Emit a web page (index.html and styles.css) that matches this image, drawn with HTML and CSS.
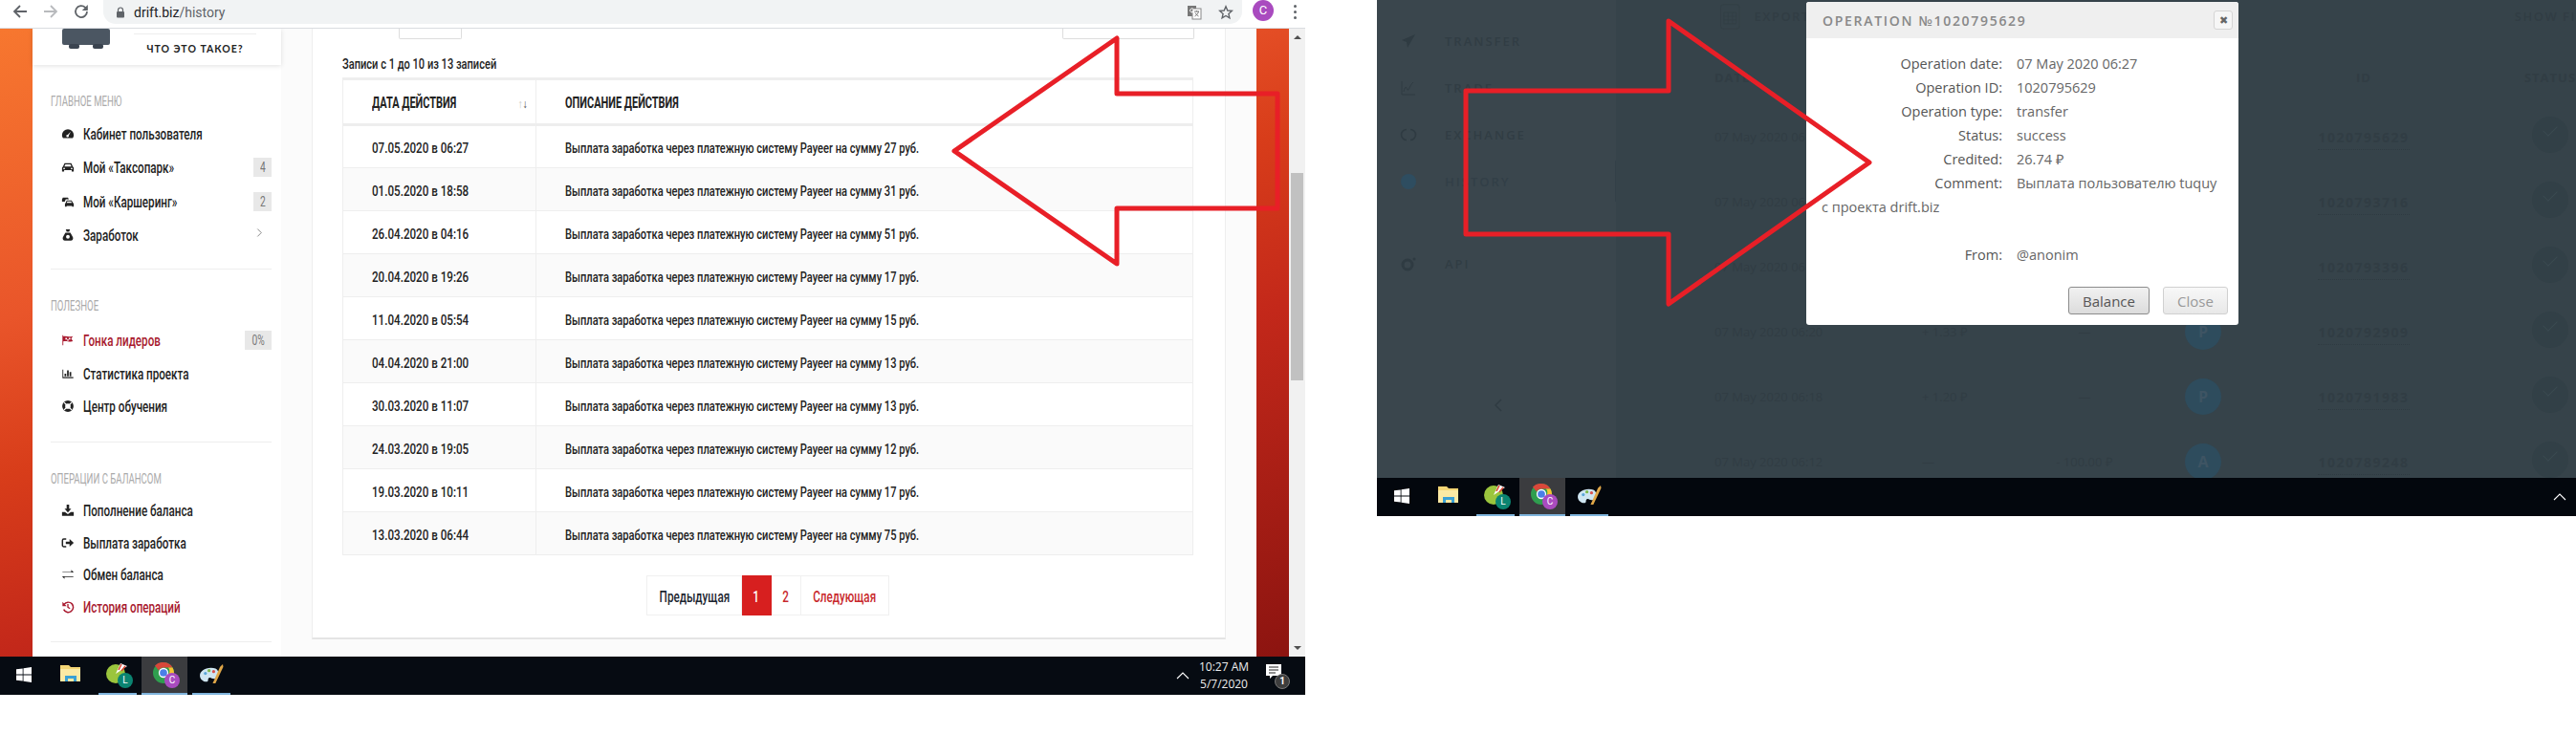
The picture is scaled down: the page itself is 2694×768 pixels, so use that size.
FILE: index.html
```html
<!DOCTYPE html>
<html lang="ru">
<head>
    <meta charset="UTF-8">
    <meta name="viewport" content="width=device-width, initial-scale=1.0">
    <title>drift.biz history</title>
    <link rel="stylesheet" href="styles.css">
</head>
<body>
    <!-- Левый снимок: браузер с историей операций -->
    <div class="shot shot-browser">
        <div class="toolbar">
            <svg class="nav-icon" viewBox="0 0 18 18"><path d="M16 9H3M9 3 3 9l6 6" fill="none" stroke="#5f6368" stroke-width="1.800"/></svg>
            <svg class="nav-icon" viewBox="0 0 18 18"><path d="M2 9h13M9 3l6 6-6 6" fill="none" stroke="#b8babd" stroke-width="1.800"/></svg>
            <svg class="nav-icon" viewBox="0 0 18 18"><path d="M15 9a6 6 0 1 1-1.800-4.200L15 6.500" fill="none" stroke="#5f6368" stroke-width="1.800"/><path d="M15.800 2v6h-6z" fill="#5f6368"/></svg>
            <div class="omnibox">
                <svg class="lock" viewBox="0 0 10 12"><path d="M2.500 5V3.500a2.500 2.500 0 0 1 5 0V5" fill="none" stroke="#5f6368" stroke-width="1.200"/><rect x="1" y="5" width="8" height="6.500" rx="1" fill="#5f6368"/></svg>
                <span class="url">drift.biz<span class="url-path">/history</span></span>
                <span class="omni-spacer"></span>
                <svg class="translate" viewBox="0 0 16 16"><rect x="1" y="1" width="9" height="11" fill="#777"/><rect x="6" y="4" width="9" height="11" fill="#fff" stroke="#888" stroke-width="1"/><path d="M8 7h5M10.500 6v1M12.500 7c-.5 2-2 4-4 5M9 8.500c.8 1.500 2 2.800 3.500 3.500" fill="none" stroke="#777"/><path d="M7 4.500a2 2 0 1 0 .3 2.500H5.500" fill="none" stroke="#fff"/></svg>
                <svg class="star" viewBox="0 0 16 16"><path d="M8 1.800 9.800 6l4.500.4-3.400 3 1 4.400L8 11.500l-3.900 2.300 1-4.400-3.400-3L6.200 6z" fill="none" stroke="#5f6368" stroke-width="1.400"/></svg>
            </div>
            <span class="avatar">C</span>
            <span class="kebab"><i></i><i></i><i></i></span>
        </div>

        <div class="viewport">
            <div class="page">
                <aside class="sidebar">
                    <div class="promo">
                        <svg class="safe" viewBox="0 0 50 21"><rect x="0" y="0" width="50" height="17" rx="2" fill="#4b5662"/><rect x="7" y="16" width="11" height="5" rx="2" fill="#3b4450"/><rect x="32" y="16" width="11" height="5" rx="2" fill="#3b4450"/></svg>
                        <div class="promo-text"><span class="promo-label">ЧТО ЭТО ТАКОЕ?</span></div>
                    </div>

                    <div class="menu-group menu-main">
                        <div class="menu-title"><span class="sq">ГЛАВНОЕ МЕНЮ</span></div>
                        <a class="menu-row">
                            <svg class="menu-icon" viewBox="0 0 16 16"><path d="M8 2.500a7 7 0 0 0-7 7c0 1.500.4 2.800 1.200 3.500h11.600c.8-.7 1.200-2 1.200-3.500a7 7 0 0 0-7-7zm3.500 2.800L9 10a1.500 1.500 0 1 1-1.200-.9z"/></svg>
                            <span class="sq">Кабинет пользователя</span>
                        </a>
                        <a class="menu-row">
                            <svg class="menu-icon" viewBox="0 0 16 16"><path d="M4 3h8l2 4.500c.7.300 1 .8 1 1.500v4h-2.500v-1.500h-9V13H1V9c0-.7.3-1.200 1-1.500zm1 1.500L3.800 7h8.400L11 4.500zM3.500 8.500a1 1 0 1 0 0 2 1 1 0 0 0 0-2zm9 0a1 1 0 1 0 0 2 1 1 0 0 0 0-2z"/></svg>
                            <span class="sq">Мой «Таксопарк»</span>
                            <span class="badge"><span class="sq-mid">4</span></span>
                        </a>
                        <a class="menu-row">
                            <svg class="menu-icon" viewBox="0 0 16 16"><path d="M2 3h6l1.200 2H5.500L4.200 8H1V5zM6.500 6.500h6l1.500 2.800c.6.300 1 .7 1 1.400V14h-2v-1H6.500v1h-2v-3.300c0-.7.400-1.100 1-1.400zm.8 1.200-.8 1.600h6.200l-.8-1.600z"/></svg>
                            <span class="sq">Мой «Каршеринг»</span>
                            <span class="badge"><span class="sq-mid">2</span></span>
                        </a>
                        <a class="menu-row">
                            <svg class="menu-icon" viewBox="0 0 16 16"><path d="M5.500 1h5l-1 3h-3zM5 5h6l3 5.500c.7 2-.5 4-2.500 4h-7C2.500 14.500 1.300 12.500 2 10.500z"/><circle cx="8" cy="10" r="2.200" fill="#fff"/></svg>
                            <span class="sq">Заработок</span>
                            <svg class="chevron" viewBox="0 0 8 12"><path d="M1.500 1.500 6 6l-4.500 4.500" fill="none" stroke="#777" stroke-width="1"/></svg>
                        </a>
                    </div>

                    <div class="menu-group menu-useful">
                        <div class="menu-title"><span class="sq">ПОЛЕЗНОЕ</span></div>
                        <a class="menu-row is-active">
                            <svg class="menu-icon" viewBox="0 0 16 16"><path d="M1.500 2v12h1V9.500c3-1 5 1 11.500-.5l-2-3 2-3C8 4.500 6 2.500 2.500 3.500V2z"/><path d="M5 5h2v2H5zm4 0h2v2H9zM7 7h2v1.500H7z" fill="#fff"/></svg>
                            <span class="sq">Гонка лидеров</span>
                            <span class="badge badge-wide"><span class="sq-mid">0%</span></span>
                        </a>
                        <a class="menu-row">
                            <svg class="menu-icon" viewBox="0 0 16 16"><path d="M1.500 3h1v9h12v1.500h-13z"/><path d="M4 8h2v3H4zm3-4h2v7H7zm3 2h2v5h-2z"/></svg>
                            <span class="sq">Статистика проекта</span>
                        </a>
                        <a class="menu-row">
                            <svg class="menu-icon" viewBox="0 0 16 16"><circle cx="8" cy="8" r="5" fill="none" stroke="#222" stroke-width="3.500"/><path d="M3.500 3.500l2.500 2.500M12.500 3.500 10 6M3.500 12.500 6 10M12.500 12.500 10 10" stroke="#fff" stroke-width="1.400"/></svg>
                            <span class="sq">Центр обучения</span>
                        </a>
                    </div>

                    <div class="menu-group menu-balance">
                        <div class="menu-title"><span class="sq">ОПЕРАЦИИ С БАЛАНСОМ</span></div>
                        <a class="menu-row">
                            <svg class="menu-icon" viewBox="0 0 16 16"><path d="M6.500 1h3v5h2.500L8 10.500 4 6h2.500zM1 10h3.500L8 12.500 11.500 10H15v4.500H1z"/></svg>
                            <span class="sq">Пополнение баланса</span>
                        </a>
                        <a class="menu-row">
                            <svg class="menu-icon" viewBox="0 0 16 16"><path d="M6 3.500H3a1.500 1.500 0 0 0-1.500 1.500v6A1.500 1.500 0 0 0 3 12.500h3" fill="none" stroke="#222" stroke-width="1.700"/><path d="M5.500 6.500H10V3.500L15 8l-5 4.500v-3H5.500z"/></svg>
                            <span class="sq">Выплата заработка</span>
                        </a>
                        <a class="menu-row">
                            <svg class="menu-icon" viewBox="0 0 16 16"><path d="M1.500 5H12V2.500L15 5.700l-3 .1H1.500zM14.500 11H4v2.500L1 10.300l3-.1h10.500z"/></svg>
                            <span class="sq">Обмен баланса</span>
                        </a>
                        <a class="menu-row is-active">
                            <svg class="menu-icon" viewBox="0 0 16 16"><path d="M3.500 5A6 6 0 1 1 3 11" fill="none" stroke="#a8192e" stroke-width="1.700"/><path d="M1.500 2v5h5z"/><path d="M8 4.500V8.500l2.500 1.500" fill="none" stroke="#a8192e" stroke-width="1.500"/></svg>
                            <span class="sq">История операций</span>
                        </a>
                    </div>
                </aside>

                <main class="content">
                    <section class="card">
                        <div class="table-tools">
                            <span class="tool-box tool-length"></span>
                            <span class="tool-box tool-search"></span>
                        </div>
                        <div class="table-info"><span class="sq">Записи с 1 до 10 из 13 записей</span></div>
                        <table class="history">
                            <thead>
                                <tr>
                                    <th class="col-date"><span class="sq">ДАТА ДЕЙСТВИЯ</span> <span class="sort"><i>↑</i>↓</span></th>
                                    <th><span class="sq">ОПИСАНИЕ ДЕЙСТВИЯ</span></th>
                                </tr>
                            </thead>
                            <tbody>
                                <tr><td><span class="sq sq-date">07.05.2020 в 06:27</span></td><td><span class="sq">Выплата заработка через платежную систему Payeer на сумму 27 руб.</span></td></tr>
                                <tr><td><span class="sq sq-date">01.05.2020 в 18:58</span></td><td><span class="sq">Выплата заработка через платежную систему Payeer на сумму 31 руб.</span></td></tr>
                                <tr><td><span class="sq sq-date">26.04.2020 в 04:16</span></td><td><span class="sq">Выплата заработка через платежную систему Payeer на сумму 51 руб.</span></td></tr>
                                <tr><td><span class="sq sq-date">20.04.2020 в 19:26</span></td><td><span class="sq">Выплата заработка через платежную систему Payeer на сумму 17 руб.</span></td></tr>
                                <tr><td><span class="sq sq-date">11.04.2020 в 05:54</span></td><td><span class="sq">Выплата заработка через платежную систему Payeer на сумму 15 руб.</span></td></tr>
                                <tr><td><span class="sq sq-date">04.04.2020 в 21:00</span></td><td><span class="sq">Выплата заработка через платежную систему Payeer на сумму 13 руб.</span></td></tr>
                                <tr><td><span class="sq sq-date">30.03.2020 в 11:07</span></td><td><span class="sq">Выплата заработка через платежную систему Payeer на сумму 13 руб.</span></td></tr>
                                <tr><td><span class="sq sq-date">24.03.2020 в 19:05</span></td><td><span class="sq">Выплата заработка через платежную систему Payeer на сумму 12 руб.</span></td></tr>
                                <tr><td><span class="sq sq-date">19.03.2020 в 10:11</span></td><td><span class="sq">Выплата заработка через платежную систему Payeer на сумму 17 руб.</span></td></tr>
                                <tr><td><span class="sq sq-date">13.03.2020 в 06:44</span></td><td><span class="sq">Выплата заработка через платежную систему Payeer на сумму 75 руб.</span></td></tr>
                            </tbody>
                        </table>
                        <div class="pager">
                            <a class="pager-item pager-prev"><span class="sq-mid">Предыдущая</span></a>
                            <a class="pager-item pager-num pager-on"><span class="sq-mid">1</span></a>
                            <a class="pager-item pager-num"><span class="sq-mid">2</span></a>
                            <a class="pager-item pager-next"><span class="sq-mid">Следующая</span></a>
                        </div>
                    </section>
                </main>
            </div>
            <div class="scrollbar">
                <span class="scroll-up"></span>
                <span class="scroll-thumb"></span>
                <span class="scroll-down"></span>
            </div>
        </div>

        <div class="taskbar">
            <span class="task task-start">
                <svg viewBox="0 0 16 16" width="16" height="16"><path d="M0 2.300 6.700 1.400V7.600H0zM7.500 1.300 16 0V7.600H7.500zM0 8.400h6.700v6.200L0 13.700zM7.500 8.400H16V16l-8.500-1.300z" fill="#fff"/></svg>
            </span>
            <span class="task">
                <svg viewBox="0 0 22 20" width="22" height="20"><path d="M0 1h9l2 2h10v15H0z" fill="#f4d675"/><path d="M0 5h21v13H0z" fill="#fbe9a4"/><path d="M5 18v-6h12v6h-3v-3H8v3z" fill="#3aa0d5"/></svg>
            </span>
            <span class="task task-open">
                <span class="app-icon">
                    <svg viewBox="0 0 24 24" width="24" height="24"><circle cx="10" cy="12" r="10" fill="#9bc53d"/><path d="M10 12 15 1l7 3z" fill="#fff"/><path d="M13 8l3-6M16 9l4-5" stroke="#d8432f" stroke-width="1.500"/></svg>
                    <b class="app-badge app-badge-teal">L</b>
                </span>
            </span>
            <span class="task task-open task-active">
                <span class="app-icon">
                    <svg viewBox="0 0 24 24" width="24" height="24"><circle cx="11" cy="11" r="11" fill="#2f9e4f"/><path d="M11 0a11 11 0 0 1 9.500 5.500H11A5.500 5.500 0 0 0 6 8.500L2 3.500A11 11 0 0 1 11 0z" fill="#d9473a"/><path d="M20.500 5.500A11 11 0 0 1 13 21.800L17 11a6 6 0 0 0-1-5.500z" fill="#f5c331"/><circle cx="11" cy="11" r="4.500" fill="#4a80e8" stroke="#fff" stroke-width="1.300"/></svg>
                    <b class="app-badge app-badge-purple">C</b>
                </span>
            </span>
            <span class="task task-open">
                <svg viewBox="0 0 26 24" width="25" height="23"><path d="M12 5C5 5 0 9 0 13.500S5 21 8 20c2-.7 0-3 2-4s3 1.500 6 1 5-5 4-8-4-4-8-4z" fill="#cfe6f2"/><circle cx="6" cy="11" r="1.700" fill="#5aa6d8"/><circle cx="10" cy="8" r="1.700" fill="#7ebb4f"/><circle cx="15" cy="9" r="1.700" fill="#d9534f"/><path d="M14 22 22 4l3-3 .5 3-8.500 18z" fill="#e0a748"/></svg>
            </span>
            <span class="task-spacer"></span>
            <svg class="tray-arrow" viewBox="0 0 14 8"><path d="M1 7l6-6 6 6" fill="none" stroke="#fff" stroke-width="1.100"/></svg>
            <div class="clock"><span>10:27 AM</span><span>5/7/2020</span></div>
            <span class="notify">
                <svg viewBox="0 0 16 15" width="16" height="15"><path d="M0 0h16v12H7l-3 3v-3H0z" fill="#fff"/><path d="M3 3h10M3 6h10M3 9h7" stroke="#222"/></svg>
                <b class="notify-count">1</b>
            </span>
        </div>

        <svg class="callout" viewBox="0 0 1365 727"><polygon points="998,158 1168,40 1168,98 1336,98 1336,218 1168,218 1168,276" fill="none" stroke="#e81f27" stroke-width="5" stroke-linejoin="round"/></svg>
    </div>

    <!-- Правый снимок: затемнённая страница с окном операции -->
    <div class="shot shot-modal">
        <div class="dim">
            <nav class="dim-side">
                <div class="dim-link">
                    <svg class="dim-icon" viewBox="0 0 16 16"><path d="M15 1 1 7l5 2 1 6z"/></svg>TRANSFER
                </div>
                <div class="dim-link">
                    <svg class="dim-icon" viewBox="0 0 16 16"><path d="M1 1v14h14M3 12c2-8 3-4 4-2s3-6 6-8" fill="none" stroke="#2f3b42"/></svg>TRADE
                </div>
                <div class="dim-link">
                    <svg class="dim-icon" viewBox="0 0 16 16"><path d="M6 2.500a5.500 5.500 0 0 0 0 11M10 13.500a5.500 5.500 0 0 0 0-11" fill="none" stroke="#2f3b42" stroke-width="1.600"/></svg>EXCHANGE
                </div>
                <div class="dim-link dim-current">
                    <svg class="dim-icon" viewBox="0 0 16 16"><circle cx="8" cy="8" r="8" fill="#2e4d60"/></svg>HISTORY
                </div>
                <div class="dim-link dim-api">
                    <svg class="dim-icon" viewBox="0 0 16 16"><circle cx="7" cy="9" r="5" fill="none" stroke="#2f3b42" stroke-width="3"/><circle cx="14" cy="3" r="1.500" fill="#2f3b42"/></svg>API
                </div>
                <svg class="dim-collapse" viewBox="0 0 10 16"><path d="M8 2 2 8l6 6" fill="none" stroke="#2f3b42" stroke-width="1.500"/></svg>
            </nav>
            <div class="dim-main">
                <div class="dim-top">
                    <svg class="dim-sheet" viewBox="0 0 21 27"><rect x=".5" y=".5" width="20" height="26" rx="3" fill="none" stroke="#333f46"/><path d="M4 9h13v12H4zM4 13h13M4 17h13M8.500 9v12M13 9v12" fill="none" stroke="#333f46"/></svg>
                    <span class="dim-export">EXPORT</span>
                    <span class="dim-filter">SHOW FI</span>
                </div>
                <div class="dim-grid dim-head">
                    <span>DATE</span><span></span><span></span><span></span><span class="dim-center">ID</span><span class="dim-center">STATUS</span>
                </div>
                <div class="dim-grid dim-row">
                    <span>07 May 2020 06</span><span></span><span></span><span></span><span class="dim-center"><u>1020795629</u></span><span class="dim-center"><b class="dim-ok"><i></i></b></span>
                </div>
                <div class="dim-grid dim-row">
                    <span>07 May 2020 06</span><span></span><span></span><span></span><span class="dim-center"><u>1020793716</u></span><span class="dim-center"><b class="dim-ok"><i></i></b></span>
                </div>
                <div class="dim-grid dim-row">
                    <span>07 May 2020 06</span><span></span><span></span><span></span><span class="dim-center"><u>1020793396</u></span><span class="dim-center"><b class="dim-ok"><i></i></b></span>
                </div>
                <div class="dim-grid dim-row">
                    <span>07 May 2020 06:20</span><span>+ 1.33 ₽</span><span class="dim-center">—</span><span class="dim-center"><b class="dim-type">P</b></span><span class="dim-center"><u>1020792909</u></span><span class="dim-center"><b class="dim-ok"><i></i></b></span>
                </div>
                <div class="dim-grid dim-row">
                    <span>07 May 2020 06:18</span><span>+ 1.20 ₽</span><span class="dim-center">—</span><span class="dim-center"><b class="dim-type">P</b></span><span class="dim-center"><u>1020791983</u></span><span class="dim-center"><b class="dim-ok"><i></i></b></span>
                </div>
                <div class="dim-grid dim-row">
                    <span>07 May 2020 06:12</span><span class="dim-dash">—</span><span class="dim-center">- 100.00 ₽</span><span class="dim-center"><b class="dim-type">A</b></span><span class="dim-center"><u>1020789248</u></span><span class="dim-center"><b class="dim-ok"><i></i></b></span>
                </div>
            </div>
        </div>

        <div class="taskbar">
            <span class="task task-start">
                <svg viewBox="0 0 16 16" width="16" height="16"><path d="M0 2.300 6.700 1.400V7.600H0zM7.500 1.300 16 0V7.600H7.500zM0 8.400h6.700v6.200L0 13.700zM7.500 8.400H16V16l-8.500-1.300z" fill="#fff"/></svg>
            </span>
            <span class="task">
                <svg viewBox="0 0 22 20" width="22" height="20"><path d="M0 1h9l2 2h10v15H0z" fill="#f4d675"/><path d="M0 5h21v13H0z" fill="#fbe9a4"/><path d="M5 18v-6h12v6h-3v-3H8v3z" fill="#3aa0d5"/></svg>
            </span>
            <span class="task task-open">
                <span class="app-icon">
                    <svg viewBox="0 0 24 24" width="24" height="24"><circle cx="10" cy="12" r="10" fill="#9bc53d"/><path d="M10 12 15 1l7 3z" fill="#fff"/><path d="M13 8l3-6M16 9l4-5" stroke="#d8432f" stroke-width="1.500"/></svg>
                    <b class="app-badge app-badge-teal">L</b>
                </span>
            </span>
            <span class="task task-open task-active">
                <span class="app-icon">
                    <svg viewBox="0 0 24 24" width="24" height="24"><circle cx="11" cy="11" r="11" fill="#2f9e4f"/><path d="M11 0a11 11 0 0 1 9.500 5.500H11A5.500 5.500 0 0 0 6 8.500L2 3.500A11 11 0 0 1 11 0z" fill="#d9473a"/><path d="M20.500 5.500A11 11 0 0 1 13 21.800L17 11a6 6 0 0 0-1-5.500z" fill="#f5c331"/><circle cx="11" cy="11" r="4.500" fill="#4a80e8" stroke="#fff" stroke-width="1.300"/></svg>
                    <b class="app-badge app-badge-purple">C</b>
                </span>
            </span>
            <span class="task task-open">
                <svg viewBox="0 0 26 24" width="25" height="23"><path d="M12 5C5 5 0 9 0 13.500S5 21 8 20c2-.7 0-3 2-4s3 1.500 6 1 5-5 4-8-4-4-8-4z" fill="#cfe6f2"/><circle cx="6" cy="11" r="1.700" fill="#5aa6d8"/><circle cx="10" cy="8" r="1.700" fill="#7ebb4f"/><circle cx="15" cy="9" r="1.700" fill="#d9534f"/><path d="M14 22 22 4l3-3 .5 3-8.500 18z" fill="#e0a748"/></svg>
            </span>
            <span class="task-spacer"></span>
            <svg class="tray-arrow tray-end" viewBox="0 0 14 8"><path d="M1 7l6-6 6 6" fill="none" stroke="#fff" stroke-width="1.100"/></svg>
        </div>

        <div class="dialog">
            <div class="dialog-head">
                <span class="dialog-title">OPERATION №1020795629</span>
                <span class="dialog-close">✖</span>
            </div>
            <div class="dialog-body">
                <div class="field"><span class="field-label">Operation date:</span><span>07 May 2020 06:27</span></div>
                <div class="field"><span class="field-label">Operation ID:</span><span>1020795629</span></div>
                <div class="field"><span class="field-label">Operation type:</span><span>transfer</span></div>
                <div class="field"><span class="field-label">Status:</span><span>success</span></div>
                <div class="field"><span class="field-label">Credited:</span><span>26.74 ₽</span></div>
                <div class="field"><span class="field-label">Comment:</span><span>Выплата пользователю tuquy</span></div>
                <div class="field-wrap">с проекта drift.biz</div>
                <div class="field field-from"><span class="field-label">From:</span><span>@anonim</span></div>
            </div>
            <div class="dialog-foot">
                <button class="btn btn-balance">Balance</button>
                <button class="btn btn-close">Close</button>
            </div>
        </div>

        <svg class="callout" viewBox="0 0 1254 540"><polygon points="93,95 305,95 305,22 515,170 305,318 305,245 93,245" fill="none" stroke="#e81f27" stroke-width="5" stroke-linejoin="round"/></svg>
    </div>
</body>
</html>
```

FILE: styles.css
```css
/* Общая страница: два снимка на белом */
body { margin: 0; height: 768px; position: relative; overflow: hidden; background: #fff; font-family: "Liberation Sans", Arial, sans-serif; }
.shot { position: absolute; top: 0; overflow: hidden; display: flex; flex-direction: column; }
.shot-browser { left: 0; width: 1365px; height: 727px; background: #fff; }
.shot-modal { left: 1440px; width: 1254px; height: 540px; }
.callout { position: absolute; left: 0; top: 0; width: 100%; height: 100%; pointer-events: none; }

/* Узкий шрифт сайта: сжимаем обычный по ширине */
.sq { display: inline-block; white-space: nowrap; transform-origin: 0 50%; transform: scaleX(.685); }
.sq-mid { display: inline-block; flex: none; white-space: nowrap; transform: scaleX(.73); }

/* Панель Chrome */
.toolbar { height: 29px; flex: none; display: flex; align-items: flex-start; background: #fff; border-bottom: 1px solid #dadce0; }
.nav-icon { width: 18px; height: 18px; margin: 3px 14px 0 0; flex: none; }
.nav-icon:first-child { margin-left: 12px; }
.omnibox { flex: 1; height: 25px; display: flex; align-items: center; background: #f1f3f4; border-radius: 13px; border-top-left-radius: 0; border-top-right-radius: 0; padding-left: 13px; }
.lock { width: 10px; height: 12px; margin-right: 9px; }
.url { font-size: 14px; color: #202124; font-family: "Roboto", sans-serif; }
.url-path { color: #5f6368; }
.omni-spacer { flex: 1; }
.translate { width: 16px; height: 16px; margin-right: 17px; }
.star { width: 16px; height: 16px; margin-right: 9px; }
.avatar { width: 22px; height: 22px; margin: 0 11px; border-radius: 50%; background: #a94bbf; color: #fff; font: 13px/22px "Roboto", sans-serif; text-align: center; }
.kebab { width: 22px; display: flex; flex-direction: column; align-items: center; gap: 3px; margin-top: 5px; }
.kebab i { width: 3px; height: 3px; border-radius: 50%; background: #5f6368; }

.viewport { flex: 1; display: flex; min-height: 0; }
.page { flex: 1; display: flex; padding: 0 34px; overflow: hidden; background: linear-gradient(165deg, #f7772f 0%, #e9552a 30%, #d83d1a 46%, #c3281a 64%, #8c1410 100%); }

/* Левое меню */
.sidebar { width: 260px; flex: none; background: #fff; box-shadow: 2px 0 4px rgba(0, 0, 0, .04); font-family: "Roboto", "Liberation Sans", sans-serif; }
.promo { height: 38px; display: flex; padding-left: 31px; box-shadow: 0 1px 5px rgba(0, 0, 0, .12); position: relative; }
.safe { width: 50px; height: 21px; }
.promo-text { margin-left: 25px; width: 128px; margin-top: 5px; border-top: 1px solid #eee; text-align: center; }
.promo-label { display: block; margin-top: 7px; font: 700 10.5px/16px "Lato", sans-serif; letter-spacing: 1px; color: #222; }

.menu-group { margin: 0 10px 0 19px; padding: 28px 0 19px; border-bottom: 1px solid #eeeeee; }
.menu-main { padding-bottom: 17px; }
.menu-title { height: 20px; font-size: 14px; line-height: 20px; color: #aaa; margin-bottom: 7px; }
.menu-main .menu-title { margin-bottom: 6px; }
.menu-useful .menu-title { margin-bottom: 9px; }
.menu-row { display: flex; align-items: center; height: 33.5px; padding-left: 11px; font-size: 17px; font-weight: 500; color: #222; }
.menu-main .menu-row { height: 35.5px; }
.menu-useful .menu-row { height: 34.5px; }
.menu-icon { width: 14px; height: 14px; margin-right: 9px; flex: none; fill: #222; }
.menu-row.is-active { color: #a8192e; }
.is-active .menu-icon { fill: #a8192e; }
.badge { margin-left: auto; width: 19px; height: 20px; display: flex; justify-content: center; background: #e8e8e8; color: #777; font-size: 14px; font-weight: 400; line-height: 20px; }
.badge-wide { width: 28px; }
.chevron { width: 7px; height: 11px; margin-left: auto; margin-right: 9px; margin-top: -5px; }

/* Карточка с таблицей */
.content { flex: 1; min-width: 0; padding: 0 32px 18px; background: #fbfbfb; }
.card { height: 100%; box-sizing: border-box; background: #fff; border: 1px solid #eee; border-top: 0; border-bottom: 2px solid #e4e4e4; padding: 0 33px 0 31px; font-family: "Roboto", "Liberation Sans", sans-serif; }
.table-tools { display: flex; justify-content: space-between; height: 11px; }
.tool-box { box-sizing: border-box; height: 11px; border: 1px solid #ddd; border-top: 0; border-radius: 0 0 2px 2px; }
.tool-length { width: 66px; margin-left: 59px; }
.tool-search { width: 138px; margin-right: -1px; }
.table-info { margin-top: 16px; height: 20px; font-size: 14px; font-weight: 500; line-height: 20px; color: #222; }
.table-info .sq { transform: scaleX(.79); }
.history { width: 890px; margin-top: 4px; border-collapse: collapse; table-layout: fixed; border: 1px solid #eee; border-top: 3px solid #eee; color: #222; }
.history th { height: 48px; padding: 2px 0 0 30px; border-left: 1px solid #eee; border-bottom: 3px solid #eee; box-sizing: border-box; text-align: left; font-size: 16px; font-weight: 700; position: relative; color: #222; }
.history .col-date { width: 202px; }
.history td { height: 45px; padding: 3px 0 0 30px; box-sizing: border-box; border: 1px solid #eee; font-size: 15px; font-weight: 500; }
.history td .sq { transform: scaleX(.74); }
.history td .sq-date { transform: scaleX(.775); }
.history tbody tr:nth-child(even) { background: #fafafa; }
.sort { position: absolute; right: 8px; top: 18px; font-size: 12px; font-weight: 400; color: #555; }
.sort i { font-style: normal; color: #ccc; margin-right: -1px; }

.pager { display: flex; justify-content: center; margin-top: 21px; }
.pager-item { height: 42px; box-sizing: border-box; display: flex; justify-content: center; line-height: 44px; font-size: 16px; font-weight: 500; color: #c8282c; border: 1px solid #f0f0f0; border-left: 0; }
.pager-prev { width: 100px; color: #1c2530; border-left: 1px solid #f0f0f0; }
.pager-next { width: 92px; }
.pager-num { width: 31px; }
.pager-on { background: #d71f1f; color: #fff; border-color: #d71f1f; }

.scrollbar { width: 17px; flex: none; position: relative; background: #f1f1f1; }
.scroll-thumb { position: absolute; left: 2px; right: 2px; top: 151px; height: 217px; background: #c1c1c1; }
.scroll-up, .scroll-down { position: absolute; left: 5px; width: 0; height: 0; border-left: 4px solid transparent; border-right: 4px solid transparent; }
.scroll-up { top: 7px; border-bottom: 4px solid #505050; }
.scroll-down { bottom: 7px; border-top: 4px solid #505050; }

/* Панель задач Windows */
.taskbar { height: 40px; flex: none; display: flex; align-items: center; background: #060b12; color: #fff; }
.shot-modal .taskbar { padding-left: 1px; background: #03070d; }
.task { width: 48px; height: 40px; margin-right: 1px; box-sizing: border-box; display: flex; align-items: center; justify-content: center; flex: none; padding-bottom: 4px; position: relative; }
.task-start { width: 49px; margin-right: 1px; padding-bottom: 0; margin-top: -2px; }
.task-open::after { content: ""; position: absolute; left: 4px; right: 4px; bottom: 0; height: 2px; background: #7fb4dc; }
.task-active { background: #3b3c3f; }
.task-active::after { left: 0; right: 0; }
.app-icon { position: relative; width: 24px; height: 24px; }
.app-badge { position: absolute; right: -4px; bottom: -3px; width: 16px; height: 16px; border-radius: 50%; color: #fff; font: 10px/16px "Roboto", sans-serif; text-align: center; }
.app-badge-teal { background: #0b8471; }
.app-badge-purple { background: #a94bbf; }
.task-spacer { flex: 1; }
.tray-arrow { width: 14px; height: 8px; margin-right: 11px; }
.tray-end { margin-right: 10px; }
.clock { display: flex; flex-direction: column; align-items: center; width: 50px; white-space: nowrap; font: 12px/18px "Open Sans", sans-serif; color: #eee; }
.notify { position: relative; margin: 0 17px 0 19px; width: 24px; height: 24px; }
.notify svg { position: absolute; left: 0; top: 0; }
.notify-count { position: absolute; right: -1px; bottom: -2px; width: 16px; height: 16px; border-radius: 50%; background: #3d3d3d; border: 1px solid #777; box-sizing: border-box; font: 700 10px/14px "Roboto", sans-serif; text-align: center; }

/* Затемнённая страница */
.dim { flex: 1; min-height: 0; display: flex; overflow: hidden; background: #3a464d; color: #313d44; font-family: "Open Sans", sans-serif; }
.dim-side { width: 250px; flex: none; padding-top: 18px; box-sizing: border-box; }
.dim-link { position: relative; height: 49px; display: flex; align-items: center; padding-left: 21px; font-size: 13px; font-weight: 600; letter-spacing: 2px; }
.dim-icon { width: 24px; height: 16px; margin-right: 26px; fill: #2f3b42; }
.dim-current { color: #323f47; }
.dim-current::after { content: ""; position: absolute; right: 0; top: 3px; width: 1px; height: 43px; background: #334048; }
.dim-api { margin-top: 37px; }
.dim-collapse { display: block; width: 10px; height: 16px; margin: 116px 0 0 122px; }
.dim-main { flex: 1; min-width: 0; background: #36434a; padding-left: 103px; overflow: hidden; }
.dim-top { height: 34px; display: flex; align-items: center; font-size: 13px; font-weight: 600; letter-spacing: 1.500px; color: #313d44; }
.dim-sheet { width: 21px; height: 27px; margin: 0 15px 0 6px; }
.dim-filter { margin-left: 737px; white-space: nowrap; }
.dim-grid { display: grid; grid-template-columns: 217px 130px 80px 168px 168px 222px; align-items: center; white-space: nowrap; }
.dim-center { text-align: center; }
.dim-head { height: 40px; margin: 27px 0 8px; font-size: 13px; font-weight: 700; letter-spacing: 1px; }
.dim-row { height: 68px; font-size: 13px; }
.dim-row u { text-decoration: none; font-weight: 700; font-size: 14px; letter-spacing: 1.500px; border-bottom: 1px dotted #2f3b42; padding-bottom: 3px; }
.dim-type { display: inline-block; width: 38px; height: 38px; border-radius: 50%; background: #2e4c5d; color: #3e5463; line-height: 38px; font-size: 16px; }
.dim-ok { display: inline-block; width: 38px; height: 38px; border-radius: 50%; background: #324047; position: relative; }
.dim-ok i { position: absolute; left: 12px; top: 9px; width: 13px; height: 7px; border-left: 1.500px solid #3b4a51; border-bottom: 1.500px solid #3b4a51; transform: rotate(-45deg); }

/* Окно операции */
.dialog { position: absolute; left: 449px; top: 2px; width: 452px; height: 338px; background: #fff; border-radius: 3px; overflow: hidden; font-family: "Open Sans", sans-serif; color: #666; display: flex; flex-direction: column; }
.dialog-head { height: 38px; flex: none; display: flex; align-items: center; justify-content: space-between; padding: 0 6px 0 17px; background: #efefef; }
.dialog-title { font-size: 14px; font-weight: 600; letter-spacing: 1.700px; color: #888; }
.dialog-close { width: 20px; height: 20px; box-sizing: border-box; border: 1px solid #d5d5d5; border-radius: 3px; background: #f6f6f6; color: #666; font-size: 11px; line-height: 18px; text-align: center; }
.dialog-body { padding-top: 14px; font-size: 14.500px; line-height: 25px; }
.field { display: flex; white-space: nowrap; }
.field-label { width: 205px; margin-right: 15px; text-align: right; color: #555; flex: none; }
.field-wrap { padding-left: 16px; }
.field-from { margin-top: 25px; }
.dialog-foot { margin-top: auto; padding: 0 11px 11px 0; display: flex; justify-content: flex-end; gap: 14px; }
.btn { height: 29px; padding: 0; box-sizing: border-box; border-radius: 3px; font: 15px "Open Sans", sans-serif; }
.btn-balance { width: 85px; border: 1px solid #8c8c8c; background: linear-gradient(#f1f1f1, #dcdcdc); color: #555; }
.btn-close { width: 68px; border: 1px solid #d0d0d0; background: linear-gradient(#f8f8f8, #e8e8e8); color: #999; }
```
